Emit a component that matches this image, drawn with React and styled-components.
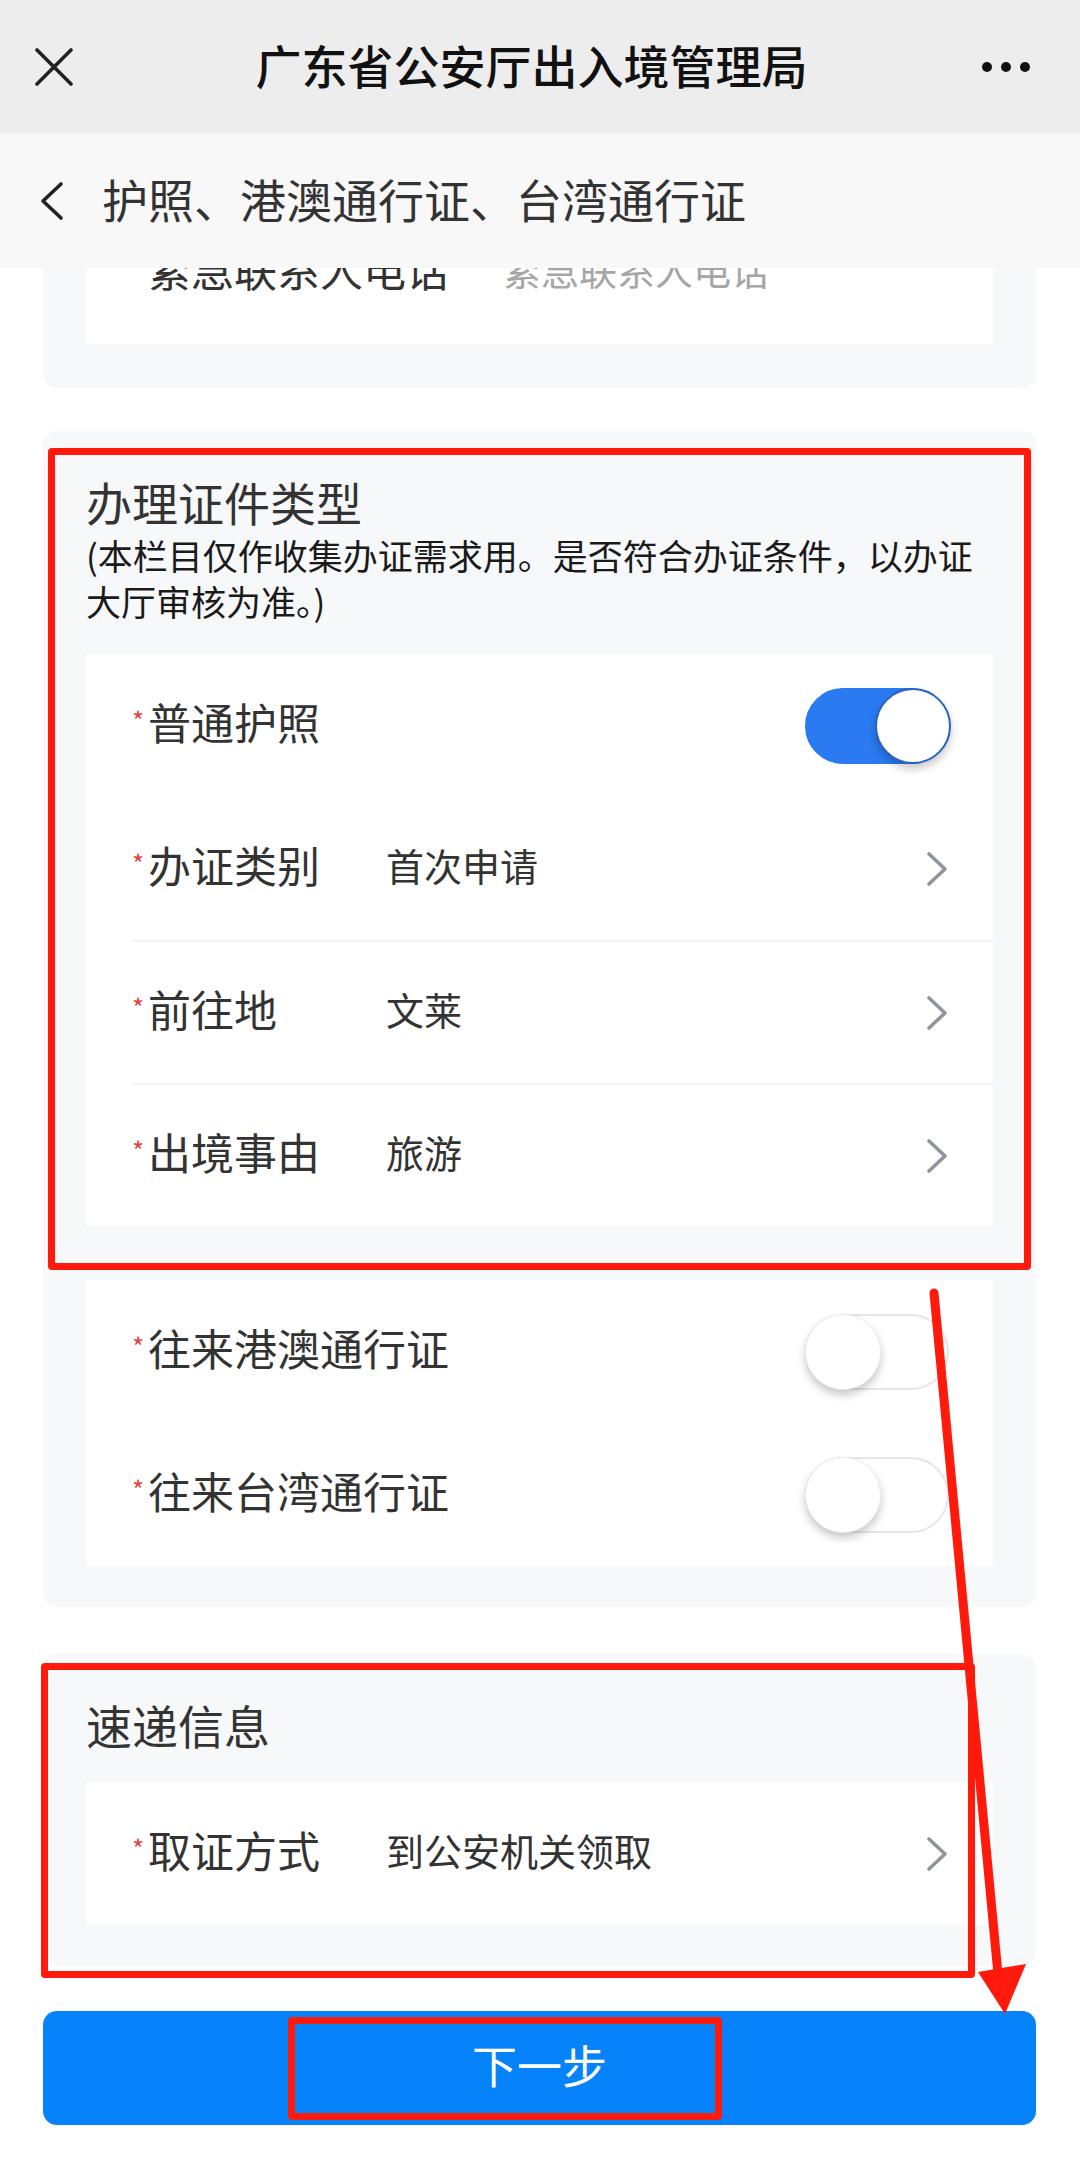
import styled, { createGlobalStyle } from "styled-components";

const GlobalStyle = createGlobalStyle`
  * {
    box-sizing: border-box;
  }
  body {
    margin: 0;
    background: #ffffff;
    font-family: "Noto Sans CJK SC", "Noto Sans", sans-serif;
  }
`;

const CloseIcon = () => (
  <svg width="38" height="38" viewBox="0 0 38 38">
    <path d="M2 2 L36 36 M36 2 L2 36" stroke="#222" strokeWidth="3.6" strokeLinecap="round" />
  </svg>
);

const BackIcon = () => (
  <svg width="26" height="40" viewBox="0 0 26 40">
    <path d="M22 3 L4 20 L22 37" stroke="#222" strokeWidth="3.6" fill="none" strokeLinecap="round" strokeLinejoin="round" />
  </svg>
);

const ChevronIcon = () => (
  <svg width="24" height="36" viewBox="0 0 24 36">
    <path d="M4 3 L20 18 L4 33" stroke="#8e959c" strokeWidth="3.6" fill="none" strokeLinecap="round" strokeLinejoin="round" />
  </svg>
);

const FormRow = ({ label, value, placeholder, divider, toggle }) => (
  <Row $divider={divider}>
    <Label>
      <Asterisk>*</Asterisk>
      {label}
    </Label>
    {placeholder && <Value $placeholder>{placeholder}</Value>}
    {value && (
      <>
        <Value>{value}</Value>
        <ChevronIcon />
      </>
    )}
    {toggle !== undefined && (
      <Toggle $on={toggle}>
        <Knob $on={toggle} />
      </Toggle>
    )}
  </Row>
);

const App = () => {
  return (
    <Page>
      <GlobalStyle />
      <TopBar>
        <BarLeft>
          <CloseIcon />
        </BarLeft>
        <TopTitle>广东省公安厅出入境管理局</TopTitle>
        <Dots>
          <Dot />
          <Dot />
          <Dot />
        </Dots>
      </TopBar>
      <SubBar>
        <BackIcon />
        <SubTitle>护照、港澳通行证、台湾通行证</SubTitle>
      </SubBar>

      <Main>
        <FirstCard>
          <WhiteCard>
            <FormRow label="紧急联系人电话" placeholder="紧急联系人电话" />
          </WhiteCard>
        </FirstCard>

        <Card>
          <SectionTitle>办理证件类型</SectionTitle>
          <Note>(本栏目仅作收集办证需求用。是否符合办证条件，以办证大厅审核为准。)</Note>
          <WhiteCard $top={31}>
            <FormRow label="普通护照" toggle={true} />
            <FormRow label="办证类别" value="首次申请" />
            <FormRow label="前往地" value="文莱" divider />
            <FormRow label="出境事由" value="旅游" divider />
          </WhiteCard>
          <WhiteCard $top={54}>
            <FormRow label="往来港澳通行证" toggle={false} />
            <FormRow label="往来台湾通行证" toggle={false} />
          </WhiteCard>
        </Card>

        <Card $top={47}>
          <SectionTitle>速递信息</SectionTitle>
          <WhiteCard $top={27}>
            <FormRow label="取证方式" value="到公安机关领取" />
          </WhiteCard>
        </Card>

        <NextButton>下一步</NextButton>
      </Main>

      <Mark $x={48} $y={448} $w={983} $h={822} />
      <Mark $x={41} $y={1663} $w={934} $h={315} />
      <Mark $x={288} $y={2017} $w={434} $h={103} />
      <ArrowLayer width="1080" height="2174" viewBox="0 0 1080 2174">
        <line x1="934" y1="1293" x2="999" y2="1985" stroke="#ff1a0b" strokeWidth="9" strokeLinecap="round" />
        <polygon points="978,1972 1026,1964 1005,2014" fill="#ff1a0b" />
      </ArrowLayer>
    </Page>
  );
};

const Page = styled.div`
  position: relative;
  width: 1080px;
  height: 2174px;
  overflow: hidden;
  background: #ffffff;
`;

const TopBar = styled.div`
  display: grid;
  grid-template-columns: 84px 1fr 86px;
  align-items: center;
  height: 134px;
  padding: 0 50px 6px 35px;
  background: #ededed;
`;

const BarLeft = styled.div`
  display: flex;
  align-items: center;
  padding-top: 6px;
`;

const TopTitle = styled.div`
  text-align: center;
  font-size: 46px;
  font-weight: 500;
  color: #111111;
`;

const Dots = styled.div`
  display: flex;
  justify-content: flex-end;
  gap: 9px;
  padding-top: 6px;
`;

const Dot = styled.span`
  width: 10px;
  height: 10px;
  border-radius: 50%;
  background: #111111;
`;

const SubBar = styled.div`
  position: relative;
  z-index: 2;
  display: flex;
  align-items: center;
  gap: 37px;
  height: 134px;
  padding-left: 39px;
  background: #f8f8f8;
`;

const SubTitle = styled.div`
  font-size: 46px;
  color: #333333;
  margin-top: -7px;
`;

const Main = styled.div`
  display: flex;
  flex-direction: column;
  padding: 0 44px 0 43px;
`;

const Card = styled.div`
  margin-top: ${(p) => p.$top ?? 43}px;
  padding: 40px 43px 41px;
  border-radius: 14px;
  background: #f7f8fa;
`;

const FirstCard = styled(Card)`
  margin-top: -67px;
  padding-top: 0;
  padding-bottom: 44px;
  border-radius: 0 0 14px 14px;
`;

const SectionTitle = styled.div`
  font-size: 46px;
  line-height: 61px;
  color: #333333;
`;

const Note = styled.div`
  font-size: 35px;
  line-height: 45.5px;
  color: #1a1a1a;
`;

const WhiteCard = styled.div`
  margin-top: ${(p) => p.$top ?? 0}px;
  background: #ffffff;
`;

const Row = styled.div`
  display: flex;
  align-items: center;
  height: 143px;
  margin-left: 46px;
  padding-right: 44px;
  border-top: ${(p) => (p.$divider ? "2px solid #f2f3f5" : "none")};
`;

const Label = styled.div`
  min-width: 200px;
  margin-right: 54px;
  margin-top: -10px;
  font-size: 43px;
  color: #333333;
  white-space: nowrap;
`;

const Asterisk = styled.span`
  display: inline-block;
  width: 16px;
  font-size: 26px;
  color: #e64340;
  vertical-align: 9px;
`;

const Value = styled.div`
  flex: 1;
  margin-top: -8px;
  font-size: 38px;
  color: ${(p) => (p.$placeholder ? "#a6a6a6" : "#333333")};
`;

const Toggle = styled.div`
  position: relative;
  margin-left: auto;
  width: 144px;
  height: 76px;
  border-radius: 38px;
  background: ${(p) => (p.$on ? "#2a7af2" : "#ffffff")};
  border: 2px solid ${(p) => (p.$on ? "#2a7af2" : "#e6e6e6")};
`;

const Knob = styled.div`
  position: absolute;
  top: -2px;
  left: ${(p) => (p.$on ? "68px" : "-2px")};
  width: 76px;
  height: 76px;
  border-radius: 50%;
  background: #ffffff;
  border: ${(p) => (p.$on ? "2px solid #2c62c4" : "1px solid #eeeeee")};
  box-shadow: 0 5px 8px rgba(0, 0, 0, 0.22);
`;

const NextButton = styled.button`
  margin-top: 45px;
  height: 114px;
  padding-bottom: 8px;
  border: none;
  border-radius: 14px;
  background: #0683fa;
  color: #ffffff;
  font-family: inherit;
  font-size: 45px;
`;

const Mark = styled.div`
  position: absolute;
  left: ${(p) => p.$x}px;
  top: ${(p) => p.$y}px;
  width: ${(p) => p.$w}px;
  height: ${(p) => p.$h}px;
  border: 7px solid #ff1a0b;
  border-radius: 4px;
  pointer-events: none;
  z-index: 5;
`;

const ArrowLayer = styled.svg`
  position: absolute;
  left: 0;
  top: 0;
  pointer-events: none;
  z-index: 6;
`;

export default App;
